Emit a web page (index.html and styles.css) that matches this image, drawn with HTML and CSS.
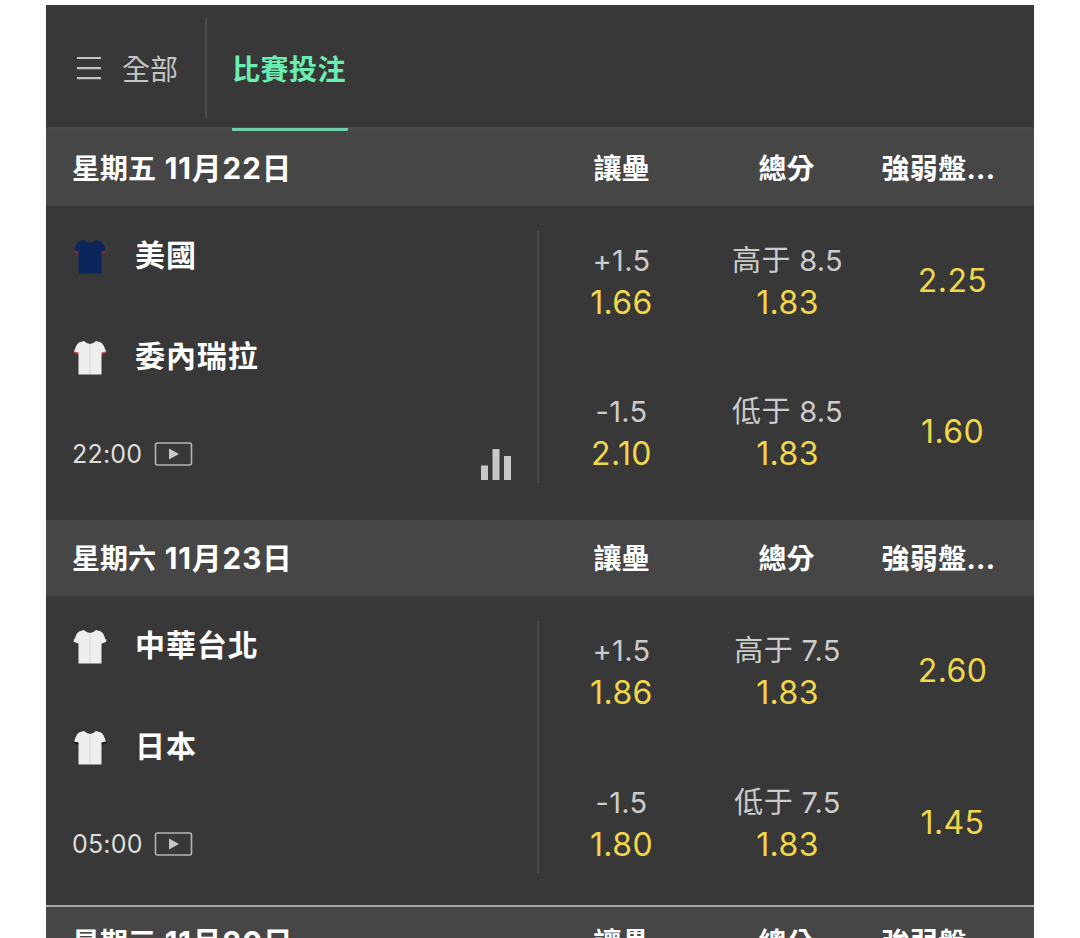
FILE: index.html
```html
<!DOCTYPE html>
<html lang="zh-Hant">
<head>
    <meta charset="UTF-8">
    <meta name="viewport" content="width=device-width, initial-scale=1.0">
    <title>比賽投注</title>
    <link rel="stylesheet" href="styles.css">
</head>
<body>
    <!-- Shared icons -->
    <svg class="icon-defs" width="0" height="0">
        <symbol id="shirt" viewBox="0 0 36 38">
            <path class="shirt-trim" d="M1.500 11.500 L2 14 L7.500 16 V12 Z M34.500 11.500 L34 14 L28.500 16 V12 Z"/>
            <path class="shirt-body" d="M12 2 Q18 8 24 2 L29 3.500 Q31.500 5 33 10 L34 12.500 L29.500 13.500 V35.500 H6.500 V13.500 L2 12.500 L3 10 Q4.500 5 7 3.500 Z"/>
            <path class="shirt-seam" d="M18 5.500 V35"/>
        </symbol>
        <symbol id="video" viewBox="0 0 38 24">
            <rect x="1" y="1" width="36" height="22" rx="2" fill="none" stroke="#b4b4b4" stroke-width="1.6"/>
            <path d="M14.500 6.500 L24.500 12 L14.500 17.500 Z" fill="#c8c8c8"/>
        </symbol>
    </svg>

    <div class="panel">
        <nav class="nav">
            <a class="nav-all">
                <svg class="menu-icon" width="26" height="24" viewBox="0 0 26 24">
                    <path d="M1 2 H25 M1 12.200 H25 M1 22.200 H25" stroke="#c4c4c4" stroke-width="2.200"/>
                </svg>
                <span>全部</span>
            </a>
            <a class="nav-tab active">比賽投注</a>
        </nav>

        <div class="day-header first">
            <span class="day">星期五 <span class="date">11月22日</span></span>
            <span>讓壘</span>
            <span>總分</span>
            <span class="last-col">強弱盤...</span>
        </div>
        <div class="match">
            <div class="teams">
                <div class="team"><svg class="shirt navy"><use href="#shirt"/></svg><span class="name">美國</span></div>
                <div class="team"><svg class="shirt red-trim"><use href="#shirt"/></svg><span class="name">委內瑞拉</span></div>
                <div class="info">
                    <span class="time">22:00</span>
                    <svg class="video"><use href="#video"/></svg>
                    <svg class="stats" width="32" height="31" viewBox="0 0 32 31">
                        <path d="M1 16.500 H8 V31 H1 Z M12.500 0 H19.500 V31 H12.500 Z M24 7 H31 V31 H24 Z" fill="#c8c8c8"/>
                    </svg>
                </div>
            </div>
            <div class="odds">
                <div class="cell"><span class="line">+1.5</span><span class="price">1.66</span></div>
                <div class="cell"><span class="line">高于 8.5</span><span class="price">1.83</span></div>
                <div class="cell single"><span class="price">2.25</span></div>
                <div class="cell"><span class="line">-1.5</span><span class="price">2.10</span></div>
                <div class="cell"><span class="line">低于 8.5</span><span class="price">1.83</span></div>
                <div class="cell single"><span class="price">1.60</span></div>
            </div>
        </div>

        <div class="day-header">
            <span class="day">星期六 <span class="date">11月23日</span></span>
            <span>讓壘</span>
            <span>總分</span>
            <span class="last-col">強弱盤...</span>
        </div>
        <div class="match short">
            <div class="teams">
                <div class="team"><svg class="shirt"><use href="#shirt"/></svg><span class="name">中華台北</span></div>
                <div class="team"><svg class="shirt black-trim"><use href="#shirt"/></svg><span class="name">日本</span></div>
                <div class="info">
                    <span class="time">05:00</span>
                    <svg class="video"><use href="#video"/></svg>
                </div>
            </div>
            <div class="odds">
                <div class="cell"><span class="line">+1.5</span><span class="price">1.86</span></div>
                <div class="cell"><span class="line">高于 7.5</span><span class="price">1.83</span></div>
                <div class="cell single"><span class="price">2.60</span></div>
                <div class="cell"><span class="line">-1.5</span><span class="price">1.80</span></div>
                <div class="cell"><span class="line">低于 7.5</span><span class="price">1.83</span></div>
                <div class="cell single"><span class="price">1.45</span></div>
            </div>
        </div>

        <div class="day-header next">
            <span class="day">星期三 <span class="date">11月20日</span></span>
            <span>讓壘</span>
            <span>總分</span>
            <span class="last-col">強弱盤...</span>
        </div>
    </div>
</body>
</html>
```
FILE: styles.css
```css
* {
    box-sizing: border-box;
}

body {
    margin: 0;
    height: 938px;
    overflow: hidden;
    background-color: #fff;
    font-family: Inter, "Noto Sans CJK TC", sans-serif;
    color: #fff;
}

.icon-defs {
    display: none;
}

.panel {
    width: 988px;
    margin: 5px 0 0 46px;
    background-color: #383838;
}

/* Top navigation */
.nav {
    display: flex;
    align-items: flex-start;
    height: 122px;
    padding-top: 13px;
    font-size: 28px;
}

.nav-all {
    display: flex;
    align-items: center;
    gap: 20px;
    width: 161px;
    height: 100px;
    padding-left: 30px;
    border-right: 2px solid #4b4b4b;
    color: #c4c4c4;
}

.nav-tab {
    height: 113px;
    width: 116px;
    margin-left: 25px;
    line-height: 104px;
    text-align: center;
    font-weight: 700;
    letter-spacing: 0.5px;
    text-indent: -2px;
    white-space: nowrap;
    color: #6beeb4;
    border-bottom: 3px solid #6fcfaa;
    border-radius: 1px;
    position: relative;
    z-index: 1;
}

/* Date rows */
.day-header {
    display: grid;
    grid-template-columns: 493px 165px 165px 165px;
    align-items: center;
    height: 76px;
    padding-bottom: 2px;
    background-color: #464646;
    font-size: 28px;
    font-weight: 700;
    text-align: center;
    white-space: nowrap;
}

.day-header.first {
    height: 79px;
    border-top: 3px solid #4b4b4b;
}

.day-header.next {
    height: 71px;
    border-top: 2px solid #a9a9a9;
}

.day {
    padding-left: 26px;
    text-align: left;
}

.date {
    margin-left: 2px;
    font-size: 29.5px;
    line-height: 34px;
    letter-spacing: 1px;
}

.last-col {
    padding-right: 26px;
    letter-spacing: 0.3px;
}

/* Match */
.match {
    display: flex;
    height: 314px;
}

.match.short {
    height: 309px;
}

.teams {
    width: 493px;
    height: 277px;
    padding-left: 26px;
    background: linear-gradient(#4a4a4a, #4a4a4a) no-repeat right 25px / 2px 252px;
}

.team {
    display: flex;
    align-items: center;
    gap: 27px;
    height: 101px;
    font-size: 30px;
    font-weight: 700;
    letter-spacing: 0.9px;
}

.name {
    padding-bottom: 7px;
}

.shirt {
    width: 36px;
    height: 38px;
}

.shirt-body {
    fill: var(--shirt, #eee);
}

.shirt-trim {
    fill: var(--trim, #eee);
}

.shirt-seam {
    fill: none;
    stroke: var(--seam, #d4d4d4);
    stroke-width: 1;
}

.navy {
    --shirt: #0c265d;
    --trim: #a32036;
    --seam: #142b55;
}

.red-trim {
    --trim: #c8414d;
}

.black-trim {
    --trim: #111;
}

.info {
    display: flex;
    align-items: center;
    height: 92px;
    padding-right: 27px;
}

.time {
    width: 82px;
    font-size: 25px;
    letter-spacing: 0.2px;
    color: #ddd;
}

.video {
    width: 39px;
    height: 24px;
}

.stats {
    margin: 21px 0 0 auto;
}

/* Odds */
.odds {
    display: grid;
    grid-template-columns: 165px 167px 163px;
    grid-template-rows: 151px 151px;
}

.short .odds {
    grid-template-rows: 151px 153px;
}

.cell {
    display: flex;
    flex-direction: column;
    align-items: center;
    justify-content: center;
    line-height: 42px;
}

.cell.single {
    padding-bottom: 2px;
}

.line {
    font-size: 29px;
    letter-spacing: 0.3px;
    color: #ccc;
}

.price {
    font-size: 32px;
    letter-spacing: 0.4px;
    color: #f1d74b;
}
```
